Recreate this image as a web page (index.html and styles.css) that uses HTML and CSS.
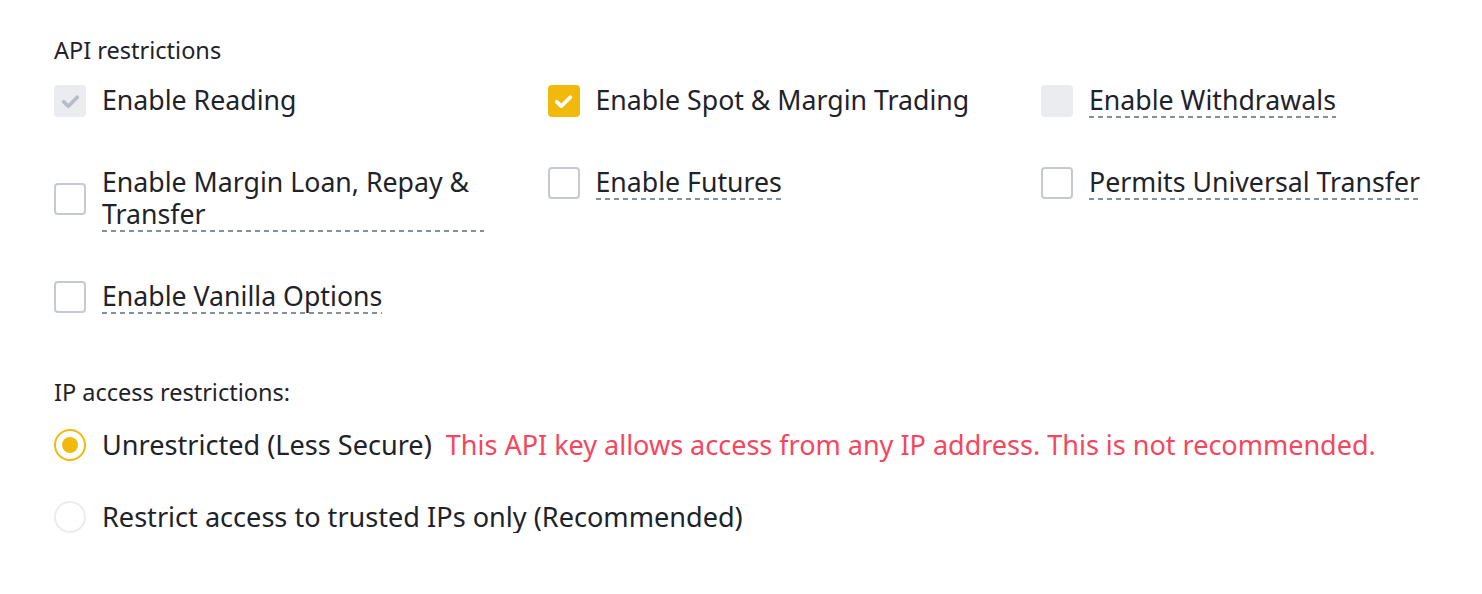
FILE: index.html
```html
<!DOCTYPE html>
<html lang="en">
<head>
    <meta charset="UTF-8">
    <meta name="viewport" content="width=device-width, initial-scale=1.0">
    <title>API Restrictions</title>
    <link rel="stylesheet" href="styles.css">
</head>
<body>
    <div class="container">
        <!-- API permissions -->
        <div class="section-title">API restrictions</div>
        <div class="perm-grid">
            <div class="perm">
                <span class="box disabled">
                    <svg viewBox="0 0 16 16"><path d="M4 8.2l2.7 2.6L12 5.5" /></svg>
                </span>
                <span class="perm-label">Enable Reading</span>
            </div>
            <div class="perm">
                <span class="box checked">
                    <svg viewBox="0 0 16 16"><path d="M4 8.2l2.7 2.6L12 5.5" /></svg>
                </span>
                <span class="perm-label">Enable Spot &amp; Margin Trading</span>
            </div>
            <div class="perm">
                <span class="box disabled"></span>
                <span class="perm-label tip">Enable Withdrawals</span>
            </div>
            <div class="perm">
                <span class="box"></span>
                <span class="perm-label tip">Enable Margin Loan, Repay &amp; Transfer</span>
            </div>
            <div class="perm">
                <span class="box"></span>
                <span class="perm-label tip">Enable Futures</span>
            </div>
            <div class="perm">
                <span class="box"></span>
                <span class="perm-label tip">Permits Universal Transfer</span>
            </div>
            <div class="perm">
                <span class="box"></span>
                <span class="perm-label tip">Enable Vanilla Options</span>
            </div>
        </div>

        <!-- IP restrictions -->
        <div class="section-title ip-title">IP access restrictions:</div>
        <div class="radio-list">
            <div class="radio-row">
                <span class="radio on"></span>
                <span class="radio-label">Unrestricted (Less Secure)</span>
                <span class="warning">This API key allows access from any IP address. This is not recommended.</span>
            </div>
            <div class="radio-row">
                <span class="radio"></span>
                <span class="radio-label">Restrict access to trusted IPs only (Recommended)</span>
            </div>
        </div>
    </div>
</body>
</html>
```

FILE: styles.css
```css
body {
    font-family: "Noto Sans", Arial, sans-serif;
    background-color: #fff;
    color: #1e2329;
    margin: 0;
    padding: 0;
}
.container {
    padding: 34px 0 0 54px;
}
.section-title {
    font-size: 23.5px;
    line-height: 32px;
    color: #1e2329;
    margin-bottom: 18px;
}
.ip-title {
    margin-top: 62px;
    margin-bottom: 21px;
}
.perm-grid {
    display: grid;
    grid-template-columns: repeat(3, 430px);
    column-gap: 63.5px;
    row-gap: 48px;
    align-items: start;
}
.perm {
    display: flex;
    align-items: center;
    gap: 16px;
}
.box {
    flex: none;
    width: 32px;
    height: 32px;
    box-sizing: border-box;
    border: 2px solid #c5cad1;
    border-radius: 4px;
    display: flex;
    align-items: center;
    justify-content: center;
}
.box svg {
    width: 27px;
    height: 27px;
    fill: none;
    stroke-width: 2.2;
    stroke-linecap: round;
    stroke-linejoin: round;
}
.box.disabled {
    background-color: #eaecef;
    border-color: #eaecef;
}
.box.disabled svg {
    stroke: #b7bdc6;
}
.box.checked {
    background-color: #f0b90b;
    border-color: #f0b90b;
}
.box.checked svg {
    stroke: #fff;
}
.perm-label {
    font-size: 26.7px;
    line-height: 32px;
    padding-bottom: 2px;
}
.tip {
    background-image: linear-gradient(to right, #848e9c 5px, transparent 5px);
    background-size: 9px 2px;
    background-repeat: repeat-x;
    background-position: left bottom;
}
.radio-list {
    display: flex;
    flex-direction: column;
    gap: 40px;
}
.radio-row {
    display: flex;
    align-items: center;
    font-size: 27.1px;
    line-height: 32px;
}
.radio {
    flex: none;
    width: 32px;
    height: 32px;
    box-sizing: border-box;
    border: 2px solid #eaecef;
    border-radius: 50%;
    margin-right: 16px;
    display: flex;
    align-items: center;
    justify-content: center;
}
.radio.on {
    border-color: #f0b90b;
}
.radio.on::after {
    content: "";
    width: 16px;
    height: 16px;
    border-radius: 50%;
    background-color: #f0b90b;
}
.warning {
    color: #f6465d;
    margin-left: 14px;
    font-size: 27px;
}
```
